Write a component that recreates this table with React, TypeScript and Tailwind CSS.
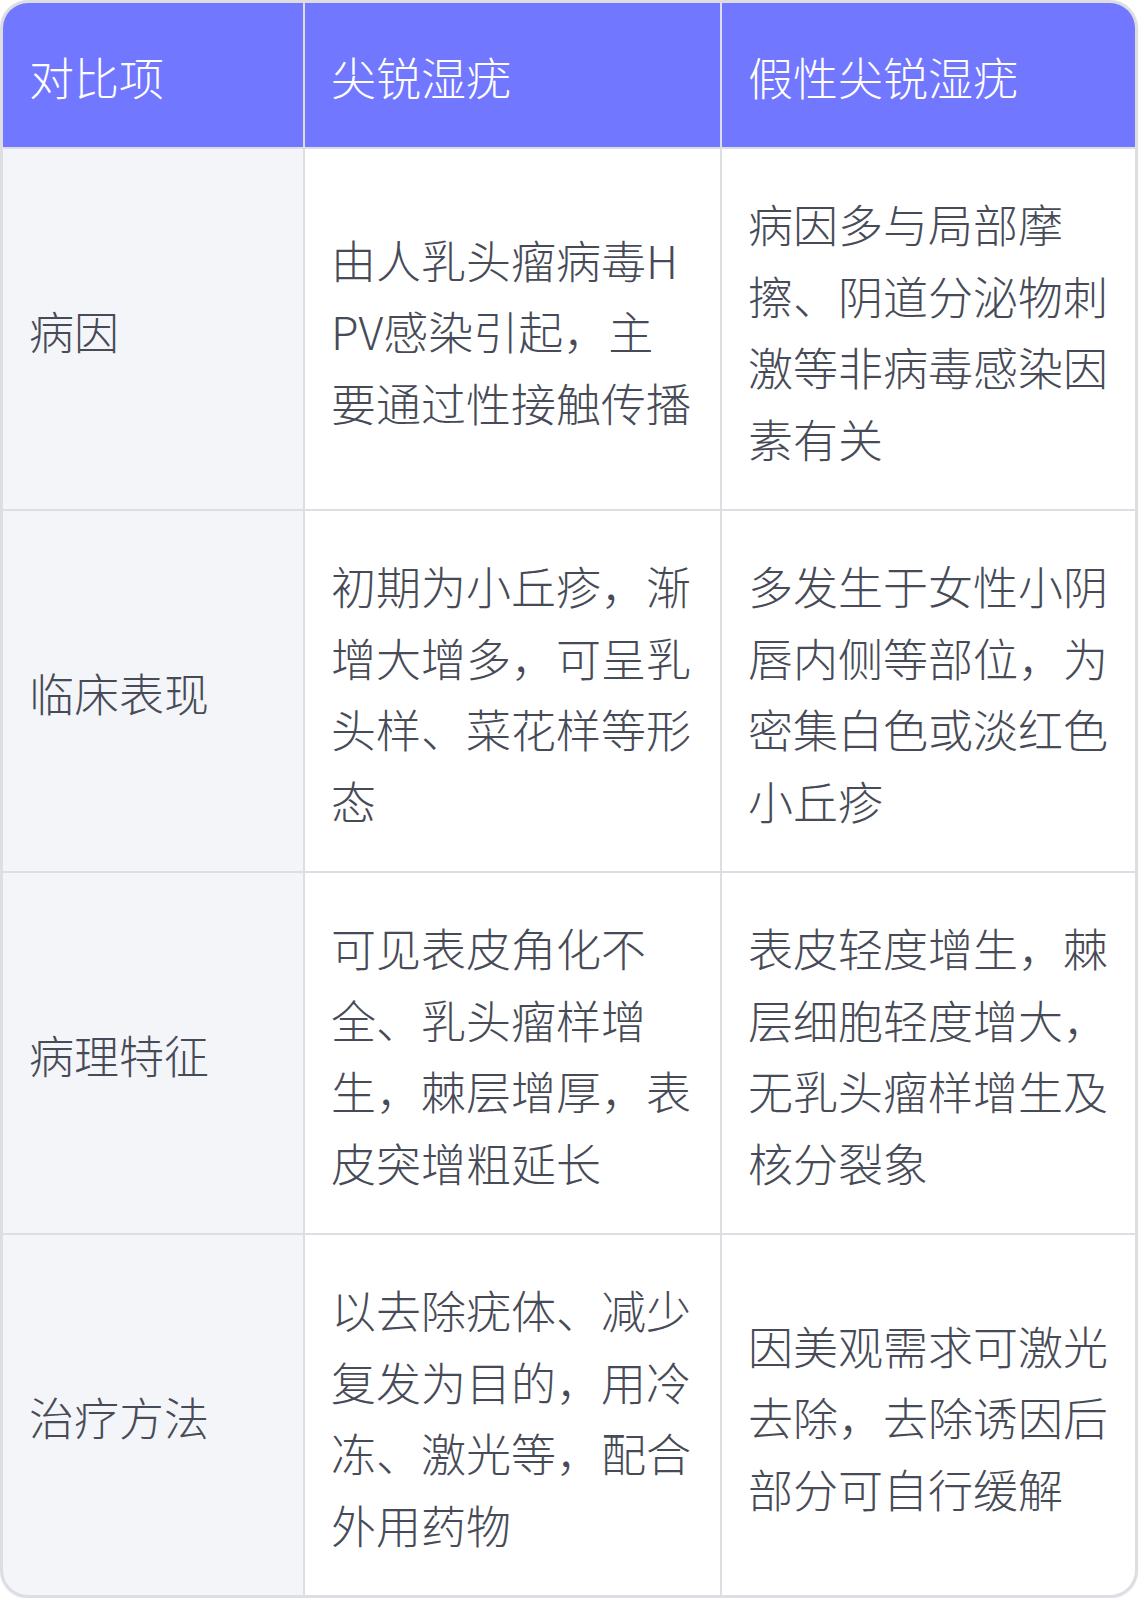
import React from "react";

const rows: { k: string; a: string; b: string }[] = [
  {
    k: "病因",
    a: "由人乳头瘤病毒HPV感染引起，主要通过性接触传播",
    b: "病因多与局部摩擦、阴道分泌物刺激等非病毒感染因素有关",
  },
  {
    k: "临床表现",
    a: "初期为小丘疹，渐增大增多，可呈乳头样、菜花样等形态",
    b: "多发生于女性小阴唇内侧等部位，为密集白色或淡红色小丘疹",
  },
  {
    k: "病理特征",
    a: "可见表皮角化不全、乳头瘤样增生，棘层增厚，表皮突增粗延长",
    b: "表皮轻度增生，棘层细胞轻度增大，无乳头瘤样增生及核分裂象",
  },
  {
    k: "治疗方法",
    a: "以去除疣体、减少复发为目的，用冷冻、激光等，配合外用药物",
    b: "因美观需求可激光去除，去除诱因后部分可自行缓解",
  },
];

export default function App() {
  const font = {
    fontFamily: '"Noto Sans CJK SC", "Noto Sans", sans-serif',
  };
  return (
    <div className="bg-white w-[1140px] h-[1598px]" style={font}>
      <div className="w-[1138px] rounded-[28px] overflow-hidden border-[3px] border-[#dddee4] bg-[#dddee4] shadow-[0_1px_2px_rgba(0,0,0,0.08)]">
        <div className="grid grid-cols-[300px_415px_413px] gap-[2px] font-light">
          <div className="bg-[#7177ff] text-white text-[45px] leading-[72px] h-[144px] pl-[26px] pr-[24px] pt-[4px] flex items-center">
            对比项
          </div>
          <div className="bg-[#7177ff] text-white text-[45px] leading-[72px] h-[144px] pl-[26px] pr-[24px] pt-[4px] flex items-center">
            尖锐湿疣
          </div>
          <div className="bg-[#7177ff] text-white text-[45px] leading-[72px] h-[144px] pl-[26px] pr-[24px] pt-[4px] flex items-center">
            假性尖锐湿疣
          </div>
          {rows.map((r) => (
            <React.Fragment key={r.k}>
              <div className="bg-[#f4f5f9] text-[#474b57] text-[45px] leading-[71.5px] h-[360px] pl-[26px] pr-[24px] pt-[4px] flex items-center">
                {r.k}
              </div>
              <div className="bg-white text-[#474b57] text-[45px] leading-[71.5px] h-[360px] pl-[26px] pr-[24px] pt-[4px] flex items-center">
                <p className="break-all">{r.a}</p>
              </div>
              <div className="bg-white text-[#474b57] text-[45px] leading-[71.5px] h-[360px] pl-[26px] pr-[24px] pt-[4px] flex items-center">
                <p className="break-all">{r.b}</p>
              </div>
            </React.Fragment>
          ))}
        </div>
      </div>
    </div>
  );
}
